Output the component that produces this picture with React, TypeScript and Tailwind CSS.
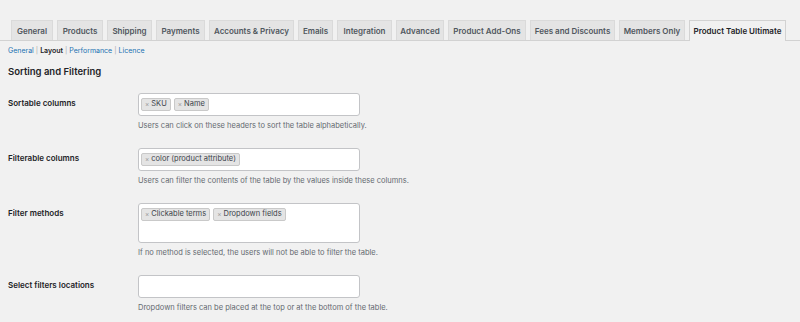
interface Field {
  label: string;
  tags: string[];
  description: string;
  tall?: boolean;
}

const TABS: { name: string; w: string }[] = [
  { name: 'General', w: 'w-[42px]' },
  { name: 'Products', w: 'w-[46px]' },
  { name: 'Shipping', w: 'w-[45px]' },
  { name: 'Payments', w: 'w-[49px]' },
  { name: 'Accounts & Privacy', w: 'w-[85px]' },
  { name: 'Emails', w: 'w-[35px]' },
  { name: 'Integration', w: 'w-[55px]' },
  { name: 'Advanced', w: 'w-[48px]' },
  { name: 'Product Add-Ons', w: 'w-[78px]' },
  { name: 'Fees and Discounts', w: 'w-[85px]' },
  { name: 'Members Only', w: 'w-[66px]' },
  { name: 'Product Table Ultimate', w: 'w-[97px]' },
];

const SUBNAV = ['General', 'Layout', 'Performance', 'Licence'];

const FIELDS: Field[] = [
  {
    label: 'Sortable columns',
    tags: ['SKU', 'Name'],
    description: 'Users can click on these headers to sort the table alphabetically.',
  },
  {
    label: 'Filterable columns',
    tags: ['color (product attribute)'],
    description: 'Users can filter the contents of the table by the values inside these columns.',
  },
  {
    label: 'Filter methods',
    tags: ['Clickable terms', 'Dropdown fields'],
    description: 'If no method is selected, the users will not be able to filter the table.',
    tall: true,
  },
  {
    label: 'Select filters locations',
    tags: [],
    description: 'Dropdown filters can be placed at the top or at the bottom of the table.',
  },
];

function Tag({ text }: { text: string }) {
  return (
    <span className="flex items-center gap-[2px] h-[13px] px-[3px] bg-[#e4e4e4] border border-[#c9c9c9] rounded-[2px] text-[7.5px] text-[#3c434a] leading-none">
      <span className="text-[#999] text-[6.5px]">×</span>
      {text}
    </span>
  );
}

export default function App() {
  const active = 'Product Table Ultimate';

  return (
    <div
      className="w-[800px] h-[322px] overflow-hidden bg-[#f1f1f1] text-[#1d2327]"
      style={{ fontFamily: 'Inter, "Noto Sans", sans-serif' }}
    >
      {/* Tabs */}
      <div className="flex items-end gap-[4px] pl-[11px] pt-[20px] border-b border-[#d2d2d2]">
        {TABS.map((t) => (
          <div
            key={t.name}
            className={`${t.w} shrink-0 flex items-center justify-center text-[8px] font-semibold border border-b-0 whitespace-nowrap ${
              t.name === active
                ? 'bg-[#f1f1f1] border-[#d2d2d2] text-[#1d2327] -mb-px h-[21px] pb-px'
                : 'bg-[#e4e4e4] border-[#dadada] text-[#50575e] h-[20px]'
            }`}
          >
            {t.name}
          </div>
        ))}
      </div>

      <div className="px-[8px]">
        {/* Sub navigation */}
        <div className="mt-[5px] flex items-center text-[7px] h-[10px] text-[#2271b1]">
          {SUBNAV.map((s, i) => (
            <span key={s} className="flex items-center">
              <span className={s === 'Layout' ? 'text-[#1d2327] font-semibold' : ''}>{s}</span>
              {i < SUBNAV.length - 1 && <span className="mx-[2px] text-[#a7aaad]">|</span>}
            </span>
          ))}
        </div>

        <h2 className="mt-[11px] text-[9.5px] font-semibold text-[#1d2327] leading-none">
          Sorting and Filtering
        </h2>

        <div className="mt-[16px] flex flex-col">
          {FIELDS.map((f) => (
            <div key={f.label} className="flex pb-[17px]">
              <div className="w-[130px] pt-[4px] text-[8px] font-semibold text-[#1d2327]">{f.label}</div>
              <div className="flex flex-col">
                <div
                  className={`w-[222px] bg-white border border-[#c3c4c7] rounded-[3px] px-[2px] pt-[4px] flex items-start gap-[3px] ${
                    f.tall ? 'h-[40px]' : 'h-[23px]'
                  }`}
                >
                  {f.tags.map((t) => (
                    <Tag key={t} text={t} />
                  ))}
                </div>
                <p className="mt-[5px] text-[7.5px] text-[#646970] leading-[10px]">{f.description}</p>
              </div>
            </div>
          ))}
        </div>
      </div>
    </div>
  );
}
